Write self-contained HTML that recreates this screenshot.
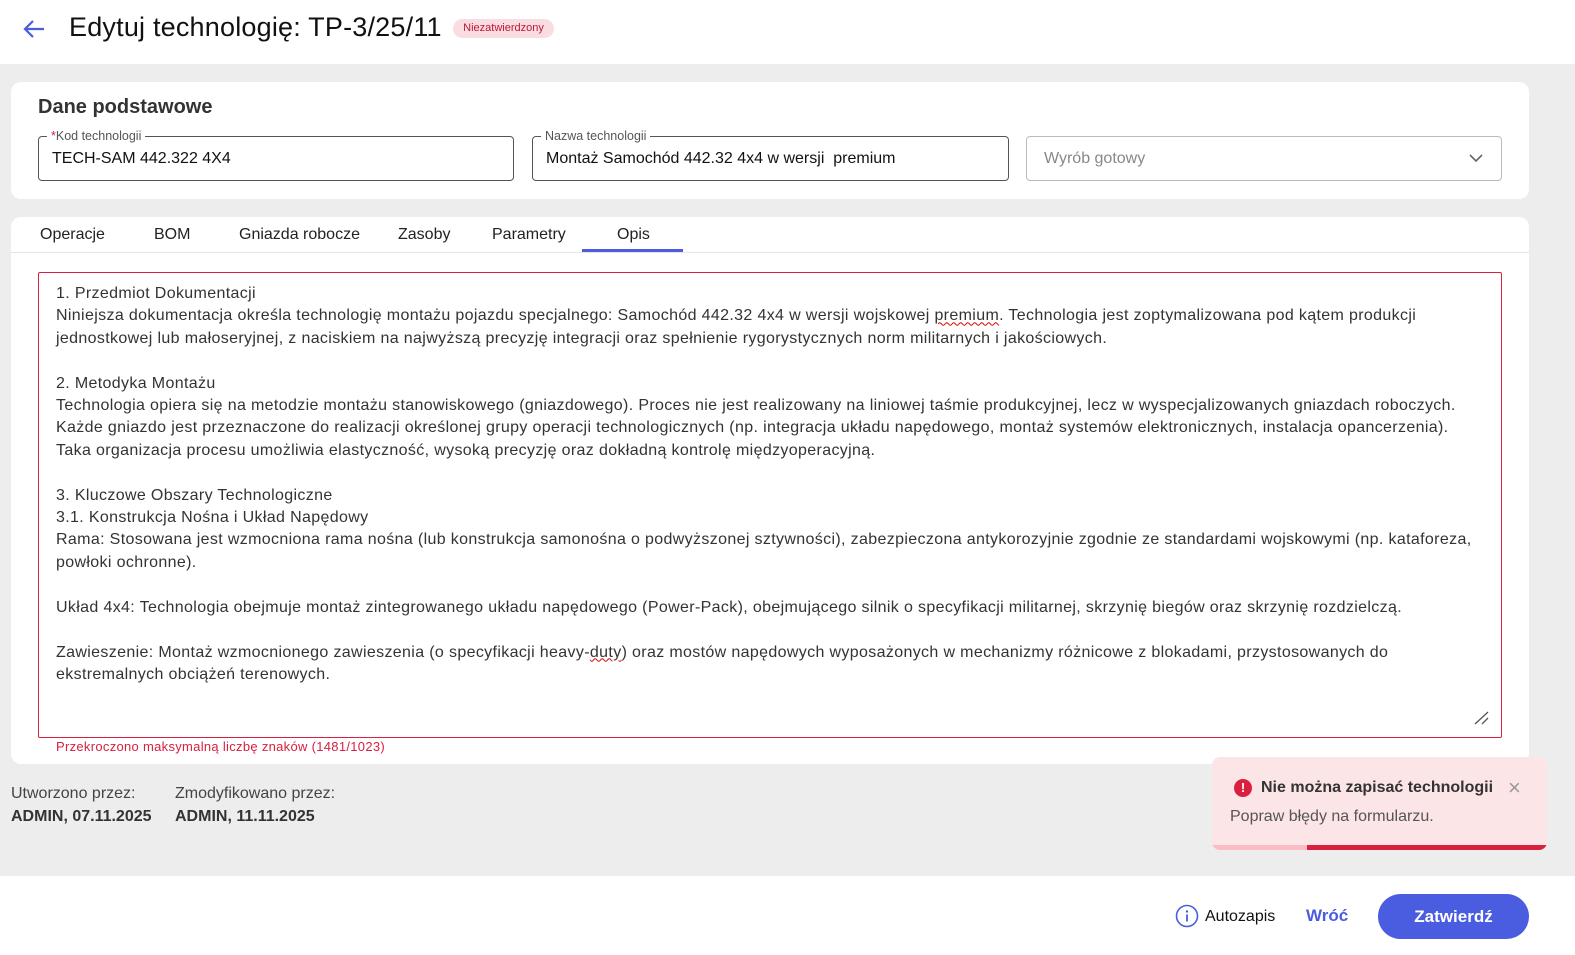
<!DOCTYPE html>
<html><head><meta charset="utf-8"><style>
*{box-sizing:border-box;margin:0;padding:0}
body{width:1575px;height:955px;background:#ededed;font-family:"Liberation Sans",sans-serif;position:relative;overflow:hidden;color:#222}
.abs{position:absolute}
.hdr{left:0;top:0;width:1575px;height:64px;background:#fff}
.card{background:#fff;border-radius:10px}
.fld{border:1px solid #555;border-radius:4px;height:45px;font-size:16px;padding:13px 13px;color:#111}
.lbl{position:absolute;top:-8px;left:8px;background:#fff;padding:0 4px;font-size:12.5px;color:#555;line-height:14px}
.tab{top:226px;font-size:16px;color:#222}
.ta{left:38px;top:272px;width:1464px;height:466px;border:1px solid #d9203f;border-radius:2px;padding:10px 17px;font-size:16px;line-height:22.4px;color:#333;white-space:pre;letter-spacing:0.35px}
u{text-decoration:underline wavy #d00;text-decoration-thickness:1px}
</style></head><body>
<div class="abs hdr"></div>
<svg class="abs" style="left:21px;top:17px" width="26" height="24" viewBox="0 0 26 24"><path d="M23 12H5M12 4L4 12l8 8" fill="none" stroke="#4a5ce0" stroke-width="2.2"/></svg>
<div class="abs" style="left:69px;top:12px;font-size:27px;color:#111;letter-spacing:0.2px">Edytuj technologię: TP-3/25/11</div>
<div class="abs" style="left:453px;top:19px;height:19px;width:101px;background:#f9dde1;border-radius:10px;font-size:11px;color:#c0163a;text-align:center;line-height:19px">Niezatwierdzony</div>

<div class="abs card" style="left:11px;top:82px;width:1518px;height:117px"></div>
<div class="abs" style="left:38px;top:96px;font-size:20px;font-weight:bold;color:#333">Dane podstawowe</div>
<div class="abs fld" style="left:38px;top:136px;width:476px"><span class="lbl"><span style="color:#d9203f">*</span>Kod technologii</span>TECH-SAM 442.322 4X4</div>
<div class="abs fld" style="left:532px;top:136px;width:477px"><span class="lbl">Nazwa technologii</span>Montaż Samochód 442.32 4x4 w wersji &nbsp;premium</div>
<div class="abs fld" style="left:1026px;top:136px;width:476px;border-color:#bbb;color:#888;padding-left:17px">Wyrób gotowy
<svg class="abs" style="right:18px;top:17px" width="14" height="9" viewBox="0 0 14 9"><path d="M1 1l6 6 6-6" fill="none" stroke="#666" stroke-width="1.6"/></svg></div>

<div class="abs card" style="left:11px;top:217px;width:1518px;height:547px"></div>
<div class="abs" style="left:11px;top:252px;width:1518px;height:1px;background:#e6e6e6"></div>
<div class="abs tab" style="left:40px">Operacje</div>
<div class="abs tab" style="left:154px">BOM</div>
<div class="abs tab" style="left:239px">Gniazda robocze</div>
<div class="abs tab" style="left:398px">Zasoby</div>
<div class="abs tab" style="left:492px">Parametry</div>
<div class="abs tab" style="left:617px">Opis</div>
<div class="abs" style="left:582px;top:249px;width:101px;height:3px;background:#4a5ce0"></div>

<div class="abs ta">1. Przedmiot Dokumentacji
Niniejsza dokumentacja określa technologię montażu pojazdu specjalnego: Samochód 442.32 4x4 w wersji wojskowej <u>premium</u>. Technologia jest zoptymalizowana pod kątem produkcji
jednostkowej lub małoseryjnej, z naciskiem na najwyższą precyzję integracji oraz spełnienie rygorystycznych norm militarnych i jakościowych.

2. Metodyka Montażu
Technologia opiera się na metodzie montażu stanowiskowego (gniazdowego). Proces nie jest realizowany na liniowej taśmie produkcyjnej, lecz w wyspecjalizowanych gniazdach roboczych.
Każde gniazdo jest przeznaczone do realizacji określonej grupy operacji technologicznych (np. integracja układu napędowego, montaż systemów elektronicznych, instalacja opancerzenia).
Taka organizacja procesu umożliwia elastyczność, wysoką precyzję oraz dokładną kontrolę międzyoperacyjną.

3. Kluczowe Obszary Technologiczne
3.1. Konstrukcja Nośna i Układ Napędowy
Rama: Stosowana jest wzmocniona rama nośna (lub konstrukcja samonośna o podwyższonej sztywności), zabezpieczona antykorozyjnie zgodnie ze standardami wojskowymi (np. kataforeza,
powłoki ochronne).

Układ 4x4: Technologia obejmuje montaż zintegrowanego układu napędowego (Power-Pack), obejmującego silnik o specyfikacji militarnej, skrzynię biegów oraz skrzynię rozdzielczą.

Zawieszenie: Montaż wzmocnionego zawieszenia (o specyfikacji heavy-<u>duty</u>) oraz mostów napędowych wyposażonych w mechanizmy różnicowe z blokadami, przystosowanych do
ekstremalnych obciążeń terenowych.</div>
<svg class="abs" style="left:1473px;top:711px" width="16" height="14" viewBox="0 0 16 14"><path d="M2 13L15 1M9 13L15 7" stroke="#555" stroke-width="1.3"/></svg>
<div class="abs" style="left:56px;top:739px;font-size:13px;color:#d9203f;letter-spacing:0.3px">Przekroczono maksymalną liczbę znaków (1481/1023)</div>

<div class="abs" style="left:11px;top:785px;font-size:16px;color:#444">Utworzono przez:</div>
<div class="abs" style="left:11px;top:808px;font-size:16px;font-weight:bold;color:#333">ADMIN, 07.11.2025</div>
<div class="abs" style="left:175px;top:785px;font-size:16px;color:#444">Zmodyfikowano przez:</div>
<div class="abs" style="left:175px;top:808px;font-size:16px;font-weight:bold;color:#333">ADMIN, 11.11.2025</div>

<div class="abs" style="left:1212px;top:757px;width:335px;height:93px;background:#fce5e6;border-radius:8px;overflow:hidden">
<div class="abs" style="left:22px;top:22px;width:18px;height:18px;border-radius:50%;background:#d9203f;color:#fff;font-size:13px;font-weight:bold;text-align:center;line-height:18px">!</div>
<div class="abs" style="left:49px;top:22px;font-size:16px;font-weight:bold;color:#333">Nie można zapisać technologii</div>
<div class="abs" style="left:296px;top:18px;font-size:22px;color:#999">×</div>
<div class="abs" style="left:18px;top:51px;font-size:16px;color:#555">Popraw błędy na formularzu.</div>
<div class="abs" style="left:0;top:88px;width:335px;height:5px;background:#fbbcc6"></div>
<div class="abs" style="left:95px;top:88px;width:240px;height:5px;background:#d9203f"></div>
</div>

<div class="abs" style="left:0;top:876px;width:1575px;height:79px;background:#fff"></div>
<svg class="abs" style="left:1175px;top:904px" width="24" height="24" viewBox="0 0 24 24"><circle cx="12" cy="12" r="10.5" fill="none" stroke="#4a5ce0" stroke-width="1.6"/><circle cx="12" cy="7.5" r="1.2" fill="#4a5ce0"/><path d="M12 10.5v7" stroke="#4a5ce0" stroke-width="1.8"/></svg>
<div class="abs" style="left:1205px;top:908px;font-size:16px;color:#111">Autozapis</div>
<div class="abs" style="left:1306px;top:906px;font-size:17px;font-weight:bold;color:#4a5ce0">Wróć</div>
<div class="abs" style="left:1378px;top:894px;width:151px;height:45px;border-radius:23px;background:#4a5ce0;color:#fff;font-size:17px;font-weight:bold;text-align:center;line-height:45px">Zatwierdź</div>
</body></html>
